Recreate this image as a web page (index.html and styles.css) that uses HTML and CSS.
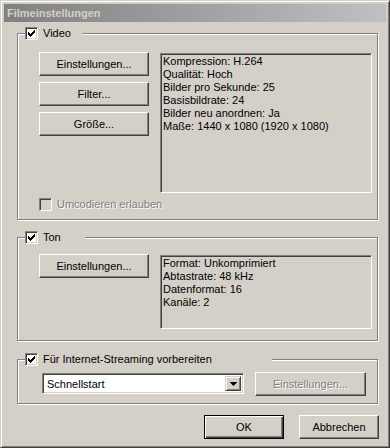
FILE: index.html
```html
<!DOCTYPE html>
<html lang="de">
<head>
    <meta charset="UTF-8">
    <meta name="viewport" content="width=device-width, initial-scale=1.0">
    <title>Filmeinstellungen</title>
    <link rel="stylesheet" href="styles.css">
</head>
<body>
    <div class="window">
        <div class="titlebar">Filmeinstellungen</div>

        <!-- Video -->
        <div class="group group-video">
            <div class="legend legend-video">
                <span class="checkbox">
                    <svg width="7" height="7" viewBox="0 0 7 7"><path d="M0 2h1v3H0z M1 3h1v3H1z M2 4h1v3H2z M3 3h1v3H3z M4 2h1v3H4z M5 1h1v3H5z M6 0h1v3H6z" fill="#000"/></svg>
                </span>
                <span>Video</span>
            </div>
            <div class="group-row">
                <div class="btn-column">
                    <button class="btn">Einstellungen...</button>
                    <button class="btn">Filter...</button>
                    <button class="btn">Größe...</button>
                </div>
                <div class="info-box info-video">
                    <div>Kompression: H.264</div>
                    <div>Qualität: Hoch</div>
                    <div>Bilder pro Sekunde: 25</div>
                    <div>Basisbildrate: 24</div>
                    <div>Bilder neu anordnen: Ja</div>
                    <div>Maße: 1440 x 1080 (1920 x 1080)</div>
                </div>
            </div>
            <div class="check-row disabled">
                <span class="checkbox"></span>
                <span>Umcodieren erlauben</span>
            </div>
        </div>

        <!-- Ton -->
        <div class="group group-audio">
            <div class="legend legend-audio">
                <span class="checkbox">
                    <svg width="7" height="7" viewBox="0 0 7 7"><path d="M0 2h1v3H0z M1 3h1v3H1z M2 4h1v3H2z M3 3h1v3H3z M4 2h1v3H4z M5 1h1v3H5z M6 0h1v3H6z" fill="#000"/></svg>
                </span>
                <span>Ton</span>
            </div>
            <div class="group-row">
                <div class="btn-column">
                    <button class="btn">Einstellungen...</button>
                </div>
                <div class="info-box info-audio">
                    <div>Format: Unkomprimiert</div>
                    <div>Abtastrate: 48 kHz</div>
                    <div>Datenformat: 16</div>
                    <div>Kanäle: 2</div>
                </div>
            </div>
        </div>

        <!-- Streaming -->
        <div class="group group-stream">
            <div class="legend legend-stream">
                <span class="checkbox">
                    <svg width="7" height="7" viewBox="0 0 7 7"><path d="M0 2h1v3H0z M1 3h1v3H1z M2 4h1v3H2z M3 3h1v3H3z M4 2h1v3H4z M5 1h1v3H5z M6 0h1v3H6z" fill="#000"/></svg>
                </span>
                <span>Für Internet-Streaming vorbereiten</span>
            </div>
            <div class="stream-row">
                <div class="select">
                    <span class="select-value">Schnellstart</span>
                    <span class="select-arrow">
                        <svg width="7" height="4" viewBox="0 0 7 4"><path d="M0 0h7v1H0z M1 1h5v1H1z M2 2h3v1H2z M3 3h1v1H3z" fill="#000"/></svg>
                    </span>
                </div>
                <button class="btn btn-wide" disabled>Einstellungen...</button>
            </div>
        </div>

        <div class="dialog-buttons">
            <button class="btn btn-small btn-default">OK</button>
            <button class="btn btn-small">Abbrechen</button>
        </div>
    </div>
</body>
</html>
```

FILE: styles.css
```css
:root {
    --face: #d4d0c8;
    --shadow: #808080;
    --dark: #404040;
    --light: #ffffff;
}

* {
    box-sizing: border-box;
}

body {
    margin: 0;
    font-family: 'Liberation Sans', Arial, sans-serif;
    font-size: 11px;
    color: #000;
    background-color: var(--face);
}

.window {
    width: 390px;
    height: 448px;
    background-color: var(--face);
    border: 1px solid;
    border-color: var(--face) var(--dark) var(--dark) var(--face);
    box-shadow: inset 1px 1px var(--light), inset -1px -1px var(--shadow);
    padding: 3px;
}

.titlebar {
    height: 18px;
    line-height: 18px;
    padding-left: 3px;
    background: linear-gradient(to right, #808080, #c0c0c0);
    color: var(--face);
    font-weight: bold;
}

/* etched group boxes */
.group {
    position: relative;
    width: 361px;
    margin-left: 13px;
    border: 1px solid var(--shadow);
    box-shadow: inset 1px 1px var(--light), 1px 1px var(--light);
}

.group-video {
    margin-top: 11px;
    padding: 18px 5px 8px 21px;
}

.group-audio {
    margin-top: 17px;
    padding: 16px 5px 11px 21px;
}

.group-stream {
    margin-top: 18px;
    padding: 12px 5px 7px 24px;
}

.legend {
    position: absolute;
    left: 7px;
    top: -7px;
    height: 13px;
    line-height: 13px;
    display: flex;
    align-items: center;
    gap: 5px;
    background-color: var(--face);
    white-space: nowrap;
}

.legend-video { width: 57px; }
.legend-audio { width: 60px; }
.legend-stream { width: 247px; }

.checkbox {
    width: 13px;
    height: 13px;
    flex-shrink: 0;
    display: flex;
    align-items: center;
    justify-content: center;
    background-color: #fff;
    border: 1px solid;
    border-color: var(--shadow) var(--light) var(--light) var(--shadow);
    box-shadow: inset 1px 1px var(--dark), inset -1px -1px var(--face);
}

.check-row {
    margin-top: 5px;
    height: 13px;
    line-height: 13px;
    display: flex;
    align-items: center;
    gap: 5px;
}

.disabled {
    color: var(--shadow);
    text-shadow: 1px 1px var(--light);
}

.disabled .checkbox {
    background-color: var(--face);
}

.group-row {
    display: flex;
    gap: 11px;
}

.btn-column {
    display: flex;
    flex-direction: column;
    gap: 6px;
    width: 110px;
}

.btn {
    height: 24px;
    padding: 0;
    font-family: inherit;
    font-size: 11px;
    color: #000;
    background-color: var(--face);
    border: 1px solid;
    border-color: var(--light) var(--dark) var(--dark) var(--light);
    box-shadow: inset -1px -1px var(--shadow), inset 1px 1px var(--face);
    border-radius: 0;
}

.btn:disabled {
    color: var(--shadow);
    text-shadow: 1px 1px var(--light);
}

.btn-wide {
    width: 111px;
}

.btn-small {
    width: 80px;
}

.btn-default {
    border-color: #000;
    box-shadow: inset 1px 1px var(--light), inset -1px -1px var(--dark), inset -2px -2px var(--shadow);
}

.info-box {
    width: 212px;
    margin-top: 1px;
    padding: 1px 1px 1px 2px;
    line-height: 13px;
    background-color: var(--face);
    border: 1px solid;
    border-color: var(--shadow) var(--light) var(--light) var(--shadow);
    box-shadow: inset 1px 1px var(--dark), inset -1px -1px var(--face);
    white-space: nowrap;
}

.info-video { height: 140px; }
.info-audio { height: 74px; }

.stream-row {
    display: flex;
    gap: 11px;
}

.select {
    width: 202px;
    height: 21px;
    margin-top: 1px;
    display: flex;
    align-items: stretch;
    padding: 2px;
    background-color: #fff;
    border: 1px solid;
    border-color: var(--shadow) var(--light) var(--light) var(--shadow);
    box-shadow: inset 1px 1px var(--dark), inset -1px -1px var(--face);
}

.select-value {
    flex: 1;
    padding-left: 2px;
    line-height: 17px;
}

.select-arrow {
    width: 16px;
    display: flex;
    align-items: center;
    justify-content: center;
    background-color: var(--face);
    border: 1px solid;
    border-color: var(--face) var(--dark) var(--dark) var(--face);
    box-shadow: inset 1px 1px var(--light), inset -1px -1px var(--shadow);
}

.dialog-buttons {
    display: flex;
    justify-content: flex-end;
    gap: 15px;
    margin-top: 11px;
    margin-right: 7px;
}
```
